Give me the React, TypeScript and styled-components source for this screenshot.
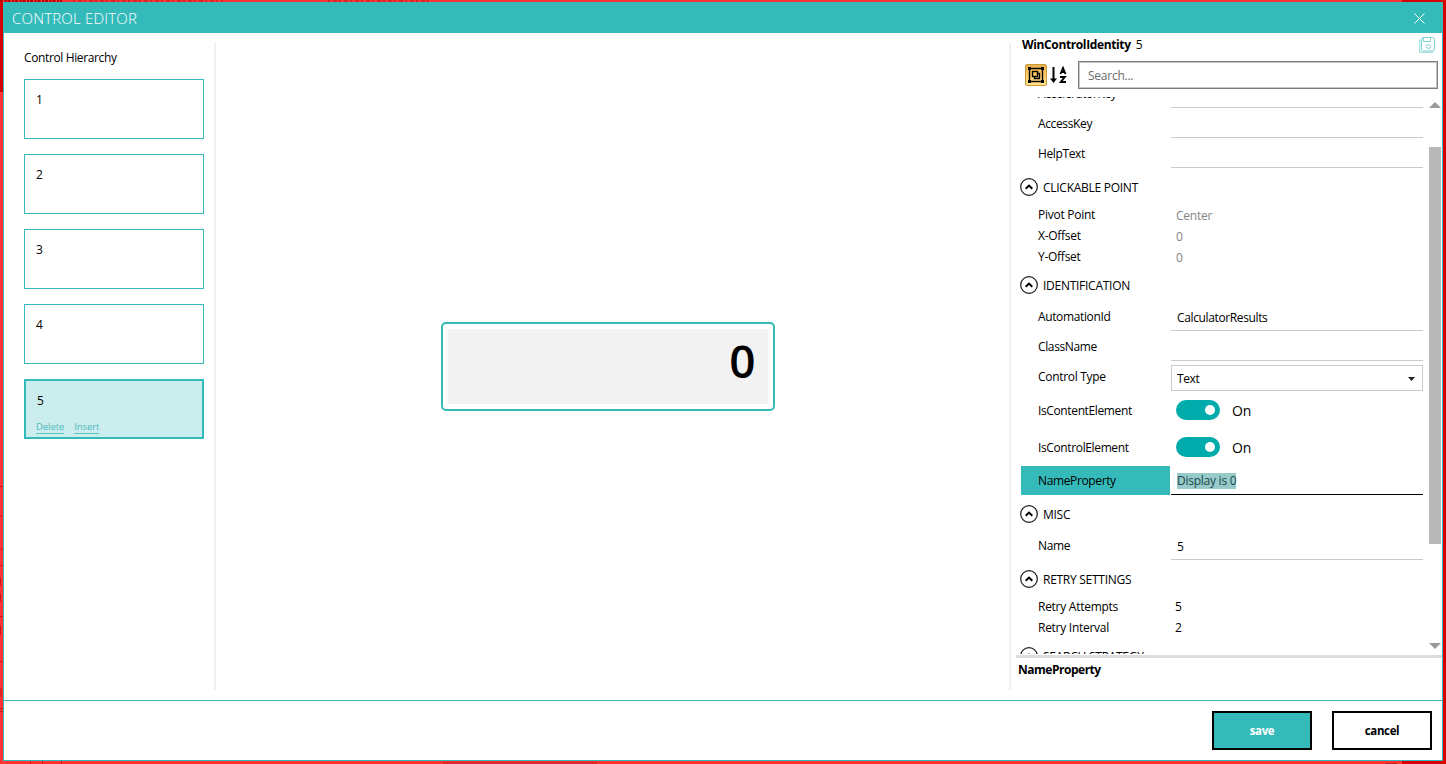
import React from "react";
import styled, { createGlobalStyle } from "styled-components";

const TEAL = "#35baba";

const Global = createGlobalStyle`
  * { box-sizing: border-box; }
  html, body { margin: 0; padding: 0; }
  body {
    width: 1446px; height: 764px; overflow: hidden;
    font-family: "Open Sans", "Noto Sans", sans-serif;
    font-size: 12px; color: #000;
  }
`;

const Desktop = styled.div`
  position: relative;
  width: 1446px; height: 764px;
  padding: 2px 3px 3px 3px;
  background:
    linear-gradient(#d60000, #d60000) right / 44px 100% no-repeat,
    linear-gradient(#d60000, #d60000) left top / 3px 92px no-repeat,
    #ff3333;
`;
const Backdrop = styled.svg`position: absolute; left: 0; top: 0;`;
const Window = styled.div`
  position: relative;
  height: 759px;
  display: flex; flex-direction: column;
  background: #fff;
  border: 1px solid ${TEAL}; border-top: 0;
`;
const TitleBar = styled.div`
  height: 31px; flex: none;
  display: flex; align-items: center; justify-content: space-between;
  padding: 0 17px 0 8px;
  background: ${TEAL}; color: #fff;
`;
const CloseIcon = styled.svg`margin-top: 2px;`;
const Txt = styled.span<{ $ls?: number }>`
  display: block; white-space: nowrap;
  letter-spacing: ${p => p.$ls ?? -0.37}px;
`;
const Title = styled(Txt)`font-size: 15px; font-weight: 300; line-height: 20px;`;
const Body = styled.div`flex: 1; display: flex; min-height: 0;`;
const Sidebar = styled.div`
  width: 212px; margin: 10px 0; padding: 7px 10px 0 20px;
  border-right: 2px solid #f0f0f0;
`;
const SideTitle = styled(Txt)`line-height: 16px; margin-bottom: 13px;`;
const Cards = styled.div`display: flex; flex-direction: column; gap: 15px;`;
const Card = styled.div<{ $active?: boolean }>`
  width: 180px; height: 60px;
  padding: 11px 11px 0;
  border: ${p => (p.$active ? 2 : 1)}px solid ${TEAL};
  background: ${p => (p.$active ? "#cceded" : "#fff")};
  line-height: 17px;
`;
const Links = styled.div`display: flex; gap: 10px; margin: 12px 0 0 -1px;`;
const Link = styled(Txt)`
  font-size: 9.5px; line-height: 11px; height: 13px; color: #4bbcbc;
  border-bottom: 1px solid #5cc6c6;
`;
const Stage = styled.div`
  flex: 1; display: flex; align-items: center; justify-content: center;
  margin-left: -10px;
`;
const Frame = styled.div`
  width: 334px; height: 89px; padding: 5px;
  border: 2px solid ${TEAL}; border-radius: 5px;
`;
const Display = styled.div`
  height: 75px; padding-right: 12px;
  background: #f2f2f2; text-align: right;
  font: 600 46px/63px "Open Sans", sans-serif;
`;
const Panel = styled.div`
  width: 433px; flex: none; display: flex;
`;
const PanelRule = styled.div`width: 2px; margin: 10px 0; background: #f0f0f0;`;
const PanelMain = styled.div`flex: 1; min-width: 0; display: flex; flex-direction: column;`;
const Heading = styled.div`
  height: 24px; flex: none; display: flex; align-items: flex-start; gap: 5px;
  padding: 4px 7px 0 11px; line-height: 15px;
  b { font-weight: 700; }
`;
const SaveAll = styled.svg`margin-left: auto;`;
const Tools = styled.div`
  height: 40px; flex: none; display: flex; align-items: flex-start;
  padding: 4px 4px 0 14px;
`;
const GroupBtn = styled.div`
  width: 22px; height: 22px; margin-top: 3px;
  border: 1px solid #c79a35; border-radius: 2px;
  background: linear-gradient(#e6b04f, #ffc964 45%, #ffe08c);
  display: flex; align-items: center; justify-content: center;
`;
const SortIcon = styled.svg`margin: 5px 10px 0 3px;`;
const Search = styled.div`
  width: 360px; height: 28px; padding: 0 9px;
  border: 1px solid #7d7d7d; box-shadow: inset 0 0 0 1px #c4c4c4;
  color: #6d6d6d; line-height: 28px;
`;
const GridArea = styled.div`height: 557px; flex: none; display: flex; overflow: hidden;`;
const Rows = styled.div`width: 412px; margin-top: -19px; padding-left: 10px;`;
const Group = styled.div<{ $plain?: boolean }>`
  padding: ${p => (p.$plain ? "2px 0 1px" : "0 0 3px")};
`;
const Category = styled.div`
  height: 32px; display: flex; align-items: center; gap: 5px; margin-left: -1px;
`;
const Row = styled.div<{ $h: number }>`height: ${p => p.$h}px; display: flex; gap: 1px;`;
const Label = styled.div<{ $on?: boolean; $h: number }>`
  width: 149px; height: ${p => p.$h}px;
  padding: ${p => (p.$h === 30 ? "1px 0 0 17px" : p.$h === 21 ? "0 0 2px 17px" : "0 0 1px 17px")};
  display: flex; align-items: center;
  background: ${p => (p.$on ? TEAL : "transparent")};
`;
const Input = styled.div<{ $focus?: boolean }>`
  width: 252px; padding: ${p => (p.$focus ? 2 : 4)}px 6px 0;
  display: flex; align-items: center;
  border-bottom: 1px solid ${p => (p.$focus ? "#000" : "#cbcbcb")};
`;
const Selected = styled(Txt)`background: #99caca; color: #17494a; line-height: 16px;`;
const Value = styled.div<{ $muted?: boolean }>`
  padding: ${p => (p.$muted ? "0 5px" : "0 5px 2px 4px")};
  display: flex; align-items: center;
  color: ${p => (p.$muted ? "#838383" : "#000")};
`;
const Select = styled.div`
  width: 252px; height: 26px; margin-top: 4px; padding: 1px 7px 0 5px;
  border: 1px solid #cbcbcb;
  display: flex; align-items: center; justify-content: space-between;
`;
const ToggleCell = styled.div`
  padding: 8px 0 0 5px; display: flex; gap: 12px;
  font-size: 14px; line-height: 22px;
`;
const Track = styled.div`
  width: 44px; height: 20px; border-radius: 10px; background: #00abab;
  display: flex; justify-content: flex-end; align-items: center; padding-right: 5px;
`;
const Knob = styled.div`width: 10px; height: 10px; border-radius: 50%; background: #fff;`;
const ScrollBar = styled.div`
  width: 12px; margin-left: 6px; padding: 5px 0;
  display: flex; flex-direction: column;
`;
const Thumb = styled.div`height: 397px; margin: 39px 0 auto; background: #b8b8b8;`;
const Info = styled.div`
  margin-left: 5px; border-top: 3px solid #dedede; padding: 3px 2px;
  margin-top: 1px; font-weight: 700; line-height: 17px;
`;
const Footer = styled.div`
  height: 60px; flex: none; padding: 10px 10px 0; border-top: 1px solid ${TEAL};
  display: flex; justify-content: flex-end; gap: 20px;
`;
const Button = styled.div<{ $primary?: boolean }>`
  width: 100px; height: 39px; border: 2px solid #000;
  background: ${p => (p.$primary ? TEAL : "#fff")};
  color: ${p => (p.$primary ? "#fff" : "#000")};
  font-weight: 700; font-size: 11.5px;
  display: flex; align-items: center; justify-content: center;
`;

const Header = ({ children }: { children: string }) => (
  <Category>
    <svg width="18" height="18" viewBox="0 0 18 18" fill="none">
      <circle cx="9" cy="9" r="8.3" stroke="#1a1a1a" strokeWidth="1.2" />
      <path d="M5.7 10.8 9 7.6l3.3 3.2" stroke="#000" strokeWidth="2" />
    </svg>
    <Txt $ls={-0.27}>{children}</Txt>
  </Category>
);

const TextRow = ({ name, value }: { name: string; value?: string }) => (
  <Row $h={30}>
    <Label $h={30}><Txt>{name}</Txt></Label>
    <Input><Txt>{value}</Txt></Input>
  </Row>
);

const PlainRow = ({ name, value, muted }: { name: string; value: string; muted?: boolean }) => (
  <Row $h={21}>
    <Label $h={21}><Txt $ls={-0.27}>{name}</Txt></Label>
    <Value $muted={muted}><Txt $ls={-0.25}>{value}</Txt></Value>
  </Row>
);

const ToggleRow = ({ name }: { name: string }) => (
  <Row $h={37}>
    <Label $h={37}><Txt>{name}</Txt></Label>
    <ToggleCell><Track><Knob /></Track><Txt $ls={-0.25}>On</Txt></ToggleCell>
  </Row>
);

export default function App() {
  return (
    <>
      <Global />
      <Desktop>
        <Backdrop width="1446" height="764" fill="none" strokeWidth="1">
          <path d="M0 486.500h3M0 516h2M0 549h3M0 565.500h3M.5 578v8M.5 594v8M0 616.500h3M.5 626v9M0 661.500h2M1 688v9M0 708.500h3M0 711.500h3" stroke="#c81818" />
          <path d="M0 1h62" stroke="#b80000" strokeWidth="2" strokeDasharray="3 1.500 2 1" />
          <path d="M73 1h150M328 1h104" stroke="#d92626" strokeWidth="2" strokeDasharray="2 3 4 2" />
          <path d="M30.500 761v3M42.500 761v3M61.500 761v3M443 763h154M1385 763.500h12" stroke="#c01c1c" />
        </Backdrop>
        <Window>
          <TitleBar>
            <Title $ls={0.2}>CONTROL EDITOR</Title>
            <CloseIcon width="11" height="11" viewBox="0 0 11 11"><path d="M.5.5l10 10M10.500.5l-10 10" stroke="#fff" strokeWidth="1" /></CloseIcon>
          </TitleBar>
          <Body>
            <Sidebar>
              <SideTitle>Control Hierarchy</SideTitle>
              <Cards>
                {["1", "2", "3", "4"].map(n => <Card key={n}>{n}</Card>)}
                <Card $active>
                  5
                  <Links><Link $ls={-0.08}>Delete</Link><Link $ls={-0.08}>Insert</Link></Links>
                </Card>
              </Cards>
            </Sidebar>
            <Stage><Frame><Display>0</Display></Frame></Stage>
            <Panel>
              <PanelRule />
              <PanelMain>
                <Heading>
                  <b><Txt>WinControlIdentity</Txt></b>
                  <Txt>5</Txt>
                  <SaveAll width="16" height="16" viewBox="0 0 16 16" fill="none" stroke="#7fd0d0">
                    <path d="M1.500 3Q.5 3.500.5 5v8.500q0 2 2 2h9.500q1.500 0 2-1" stroke="#a5dede" strokeWidth="1.500" />
                    <rect x="2.500" y=".5" width="13" height="13.500" rx="2" />
                    <path d="M4.500 1v3.500h7V1" />
                    <circle cx="9.500" cy="9.500" r="2" />
                  </SaveAll>
                </Heading>
                <Tools>
                  <GroupBtn>
                    <svg width="18" height="18" viewBox="0 0 18 18" fill="none" stroke="#000">
                      <rect x="2.500" y="2.500" width="13" height="13" strokeWidth="1.400" />
                      <path d="M1 1h3v3H1zM14 1h3v3h-3zM1 14h3v3H1zM14 14h3v3h-3z" fill="#000" stroke="none" />
                      <rect x="5.500" y="5.500" width="5" height="5" strokeWidth="1.400" />
                      <path d="M10.500 7.500h2v5h-5v-2" strokeWidth="1.400" />
                    </svg>
                  </GroupBtn>
                  <SortIcon width="18" height="18" viewBox="0 0 18 18" fill="none" stroke="#000">
                    <path d="M3.500 1v13" strokeWidth="2" />
                    <path d="M0 12.500h7L3.500 17z" fill="#000" stroke="none" />
                    <path d="M10.500 8 13 2l2.500 6M11.500 6h3" strokeWidth="1.900" />
                    <path d="M10 11h4.800l-4 5H16" strokeWidth="1.900" />
                  </SortIcon>
                  <Search><Txt $ls={-0.25}>Search...</Txt></Search>
                </Tools>
                <GridArea>
                  <Rows>
                    <Group>
                      <TextRow name="AcceleratorKey" />
                      <TextRow name="AccessKey" />
                      <TextRow name="HelpText" />
                    </Group>
                    <Header>CLICKABLE POINT</Header>
                    <Group $plain>
                      <PlainRow name="Pivot Point" value="Center" muted />
                      <PlainRow name="X-Offset" value="0" muted />
                      <PlainRow name="Y-Offset" value="0" muted />
                    </Group>
                    <Header>IDENTIFICATION</Header>
                    <Group>
                      <TextRow name="AutomationId" value="CalculatorResults" />
                      <TextRow name="ClassName" />
                      <Row $h={31}>
                        <Label $h={31}><Txt $ls={-0.3}>Control Type</Txt></Label>
                        <Select>
                          <Txt>Text</Txt>
                          <svg width="7" height="4"><path d="M0 0h7L3.500 4z" fill="#222" /></svg>
                        </Select>
                      </Row>
                      <ToggleRow name="IsContentElement" />
                      <ToggleRow name="IsControlElement" />
                      <Row $h={29}>
                        <Label $on $h={29}><Txt>NameProperty</Txt></Label>
                        <Input $focus><Selected $ls={-0.25}>Display is 0</Selected></Input>
                      </Row>
                    </Group>
                    <Header>MISC</Header>
                    <Group><TextRow name="Name" value="5" /></Group>
                    <Header>RETRY SETTINGS</Header>
                    <Group $plain>
                      <PlainRow name="Retry Attempts" value="5" />
                      <PlainRow name="Retry Interval" value="2" />
                    </Group>
                    <Header>SEARCH STRATEGY</Header>
                  </Rows>
                  <ScrollBar>
                    <svg width="12" height="6"><path d="M0 6h12L6 0z" fill="#999" /></svg>
                    <Thumb />
                    <svg width="12" height="6"><path d="M0 0h12L6 6z" fill="#999" /></svg>
                  </ScrollBar>
                </GridArea>
                <Info><Txt $ls={-0.48}>NameProperty</Txt></Info>
              </PanelMain>
            </Panel>
          </Body>
          <Footer>
            <Button $primary><Txt>save</Txt></Button>
            <Button><Txt>cancel</Txt></Button>
          </Footer>
        </Window>
      </Desktop>
    </>
  );
}
